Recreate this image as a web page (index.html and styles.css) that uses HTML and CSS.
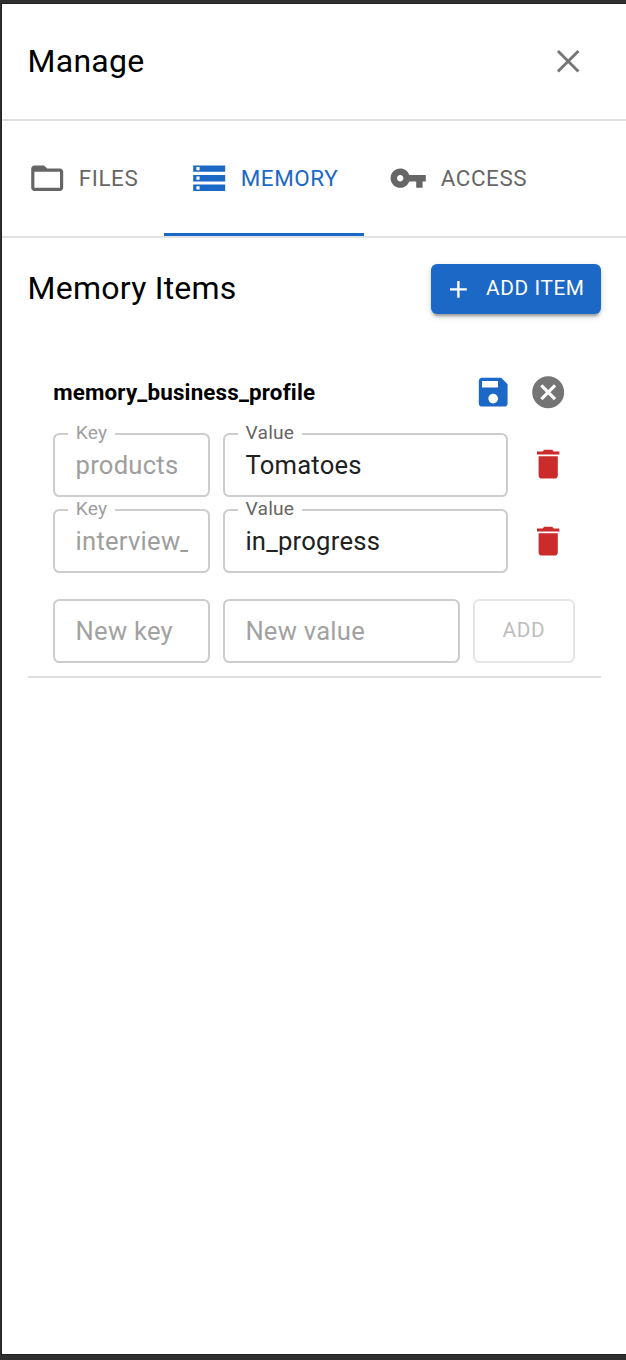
FILE: index.html
```html
<!DOCTYPE html>
<html lang="en">
<head>
    <meta charset="UTF-8">
    <meta name="viewport" content="width=device-width, initial-scale=1.0">
    <title>Manage</title>
    <link rel="stylesheet" href="styles.css">
</head>
<body>
    <div class="panel">
        <header class="panel-header">
            <h1 class="title">Manage</h1>
            <button class="icon-button close" aria-label="Close">
                <svg viewBox="0 0 24 24"><path d="M5.6 5.6 18.4 18.4M18.4 5.6 5.6 18.4" fill="none" stroke="currentColor" stroke-width="1.8"/></svg>
            </button>
        </header>

        <nav class="tabs">
            <button class="tab">
                <svg viewBox="0 0 24 24"><path d="M20 6h-8l-2-2H4c-1.1 0-1.99.9-1.99 2L2 18c0 1.1.9 2 2 2h16c1.1 0 2-.9 2-2V8c0-1.1-.9-2-2-2zm0 12H4V8h16v10z"/></svg>
                <span>FILES</span>
            </button>
            <button class="tab active">
                <svg viewBox="0 0 24 24"><path d="M2 20h20v-4H2v4zm2-3h2v2H4v-2zM2 4v4h20V4H2zm4 3H4V5h2v2zm-4 7h20v-4H2v4zm2-3h2v2H4v-2z"/></svg>
                <span>MEMORY</span>
            </button>
            <button class="tab">
                <svg viewBox="0 0 24 24"><path d="M12.65 10C11.83 7.67 9.61 6 7 6c-3.31 0-6 2.69-6 6s2.69 6 6 6c2.61 0 4.83-1.67 5.65-4H17v4h4v-4h2v-4H12.65zM7 14c-1.1 0-2-.9-2-2s.9-2 2-2 2 .9 2 2-.9 2-2 2z"/></svg>
                <span>ACCESS</span>
            </button>
        </nav>

        <main class="content">
            <div class="section-header">
                <h2 class="title">Memory Items</h2>
                <button class="add-item">
                    <svg viewBox="0 0 24 24"><path d="M19 13h-6v6h-2v-6H5v-2h6V5h2v6h6v2z"/></svg>
                    <span>ADD ITEM</span>
                </button>
            </div>

            <section class="item">
                <div class="item-header">
                    <h3 class="item-name">memory_business_profile</h3>
                    <button class="icon-button save" aria-label="Save">
                        <svg viewBox="0 0 24 24"><path d="M17 3H5c-1.11 0-2 .9-2 2v14c0 1.1.89 2 2 2h14c1.1 0 2-.9 2-2V7l-4-4zm-5 16c-1.66 0-3-1.34-3-3s1.34-3 3-3 3 1.34 3 3-1.34 3-3 3zm3-10H5V5h10v4z"/></svg>
                    </button>
                    <button class="icon-button cancel" aria-label="Cancel">
                        <svg viewBox="0 0 24 24"><path d="M12 2C6.47 2 2 6.47 2 12s4.47 10 10 10 10-4.47 10-10S17.53 2 12 2zm5 13.59L15.59 17 12 13.41 8.41 17 7 15.59 10.59 12 7 8.41 8.41 7 12 10.59 15.59 7 17 8.41 13.41 12 17 15.59z"/></svg>
                    </button>
                </div>

                <div class="row">
                    <label class="field key">
                        <span class="label">Key</span>
                        <input type="text" value="products" disabled>
                    </label>
                    <label class="field">
                        <span class="label">Value</span>
                        <input type="text" value="Tomatoes">
                    </label>
                    <button class="icon-button delete" aria-label="Delete">
                        <svg viewBox="0 0 24 24"><path d="M6 19c0 1.1.9 2 2 2h8c1.1 0 2-.9 2-2V7H6v12zM19 4h-3.5l-1-1h-5l-1 1H5v2h14V4z"/></svg>
                    </button>
                </div>

                <div class="row">
                    <label class="field key">
                        <span class="label">Key</span>
                        <input type="text" value="interview_" disabled>
                    </label>
                    <label class="field">
                        <span class="label">Value</span>
                        <input type="text" value="in_progress">
                    </label>
                    <button class="icon-button delete" aria-label="Delete">
                        <svg viewBox="0 0 24 24"><path d="M6 19c0 1.1.9 2 2 2h8c1.1 0 2-.9 2-2V7H6v12zM19 4h-3.5l-1-1h-5l-1 1H5v2h14V4z"/></svg>
                    </button>
                </div>

                <div class="row new-row">
                    <div class="field key">
                        <input type="text" placeholder="New key">
                    </div>
                    <div class="field">
                        <input type="text" placeholder="New value">
                    </div>
                    <button class="add" disabled>ADD</button>
                </div>
            </section>
        </main>
    </div>
</body>
</html>
```
FILE: styles.css
```css
* {
    box-sizing: border-box;
}
body {
    margin: 0;
    height: 1360px;
    padding: 4px 0 6px 2px;
    background-color: #303030;
    font-family: Roboto, "Liberation Sans", sans-serif;
    color: #000;
}
button {
    padding: 0;
    border: none;
    background: none;
    font-family: inherit;
    cursor: pointer;
}
svg {
    display: block;
    width: 38.4px;
    height: 38.4px;
    fill: currentColor;
}
.panel {
    height: 1350px;
    background-color: #fff;
    box-shadow: 0 0 0 1px #202020;
}
.panel-header {
    display: flex;
    align-items: center;
    justify-content: space-between;
    height: 117px;
    padding: 0 30.6px 0 25.6px;
    border-bottom: 2px solid #e0e0e0;
}
.title {
    margin: 0;
    font-size: 32px;
    font-weight: 400;
    line-height: 51px;
    letter-spacing: 0.24px;
}
.icon-button {
    display: flex;
    flex: none;
    align-items: center;
    justify-content: center;
    width: 54.4px;
    height: 54.4px;
}
.close {
    color: #757575;
}
.tabs {
    display: flex;
    height: 117px;
    border-bottom: 2px solid #e2e2e2;
}
.tab {
    display: flex;
    align-items: center;
    gap: 12.8px;
    padding: 0 25.6px;
    color: #666;
    font-size: 22.4px;
    letter-spacing: 0.6px;
}
.tab span {
    padding-bottom: 2px;
}
.tab.active {
    color: #1b68c6;
    box-shadow: inset 0 -3px #1b68c6;
}
.content {
    padding: 26px 25.4px 0 25.6px;
}
.section-header {
    display: flex;
    align-items: center;
    justify-content: space-between;
    height: 50px;
}
.section-header .title {
    padding-bottom: 2px;
}
.add-item {
    display: flex;
    align-items: center;
    gap: 13px;
    height: 50px;
    padding: 0 16px 0 13px;
    border-radius: 6px;
    background-color: #1b68c6;
    box-shadow: 0 5px 2px -3px rgba(0,0,0,0.2), 0 3px 3px rgba(0,0,0,0.14), 0 2px 8px rgba(0,0,0,0.12);
    color: #fff;
    font-size: 20.8px;
    letter-spacing: 0.6px;
}
.add-item span {
    padding-bottom: 2px;
}
.add-item svg {
    width: 28.8px;
    height: 28.8px;
}
.item {
    margin-top: 26px;
    padding: 25.6px 25.6px 13px;
    border-bottom: 2px solid #dedede;
}
.item-header {
    display: flex;
    align-items: center;
    height: 54px;
    margin-bottom: 13px;
}
.item-name {
    flex: 1;
    margin: 0;
    padding-bottom: 1px;
    font-size: 22.4px;
    font-weight: 700;
    letter-spacing: 0.16px;
}
.save {
    color: #1b68c6;
}
.cancel {
    color: #757575;
}
.delete {
    color: #ca2c2c;
}
.row {
    display: flex;
    align-items: center;
    gap: 13px;
    height: 64px;
    margin-bottom: 12.8px;
}
.new-row {
    margin: 25.6px 0 0;
}
.field {
    position: relative;
    flex: 1;
    min-width: 0;
    height: 64px;
}
.key {
    flex: 0 0 156.8px;
}
.field input {
    display: block;
    width: 100%;
    height: 64px;
    padding: 0 20.4px;
    border: 2px solid #cdcdcd;
    border-radius: 6.4px;
    background-color: #fff;
    color: #212121;
    font-family: inherit;
    font-size: 25.6px;
    letter-spacing: 0.24px;
}
.field input:disabled {
    color: #9e9e9e;
}
.field input::placeholder {
    color: #a2a2a2;
}
/* sits over the top border and cuts the notch */
.label {
    position: absolute;
    top: -11px;
    left: 14.6px;
    padding: 0 8px;
    background-color: #fff;
    color: #666;
    font-size: 19.2px;
    line-height: 22px;
    letter-spacing: 0.18px;
}
.key .label {
    color: #9e9e9e;
}
.add {
    width: 102.4px;
    height: 64px;
    padding-bottom: 1px;
    border: 2px solid #e6e6e6;
    border-radius: 6.4px;
    color: #bdbdbd;
    font-size: 20.8px;
    letter-spacing: 0.6px;
}
```
